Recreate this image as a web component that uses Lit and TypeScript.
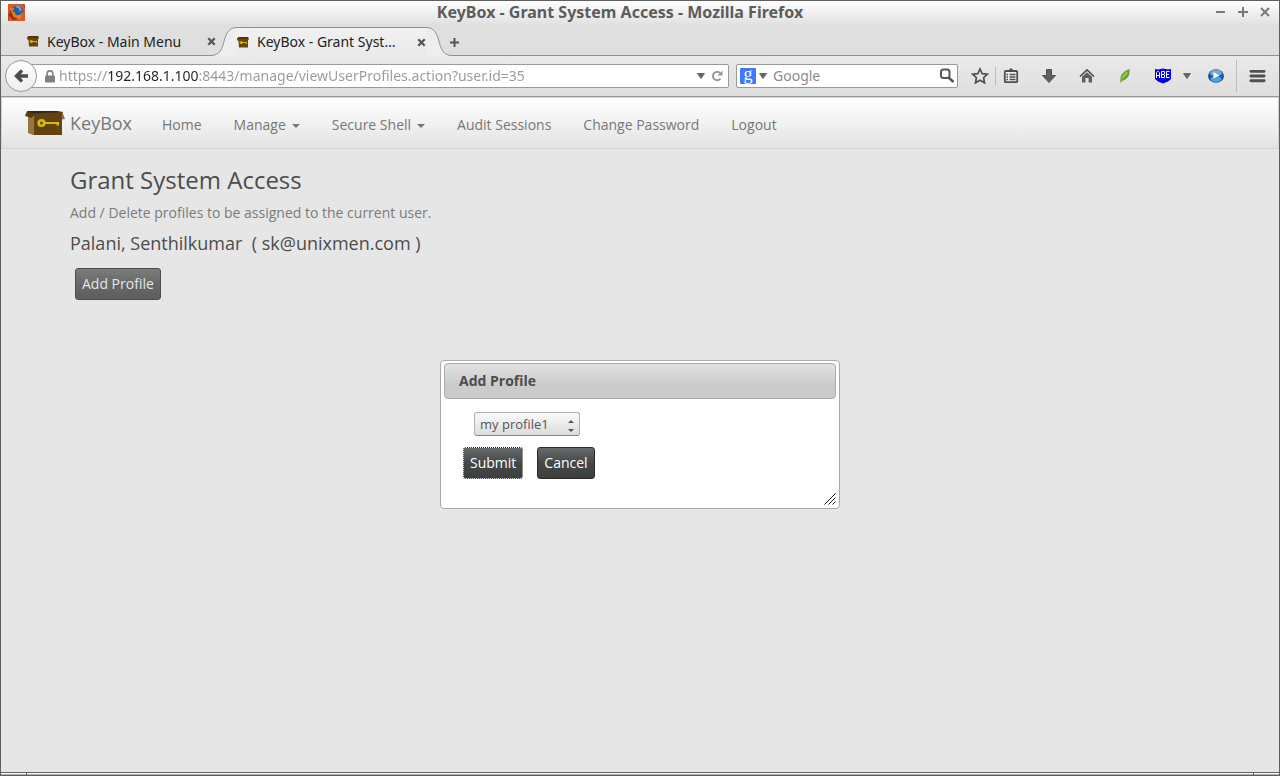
import { LitElement, html, css, svg } from "lit";
import { customElement } from "lit/decorators.js";

const favicon = html`<svg class="favicon" viewBox="0 0 12 11" width="12" height="11" aria-hidden="true">
  <path d="M0 1.5L1.5 0H11L12 2.500L11 3V10.500H2L1.500 4L0 3Z" fill="#6a4510"/>
  <path d="M1 1.500L2 0H11L11.500 1.500Z" fill="#4a2f08"/>
  <circle cx="4.300" cy="5.500" r="1.600" fill="#d8b400"/>
  <path d="M5 5h5v2h-1v-1h-4z" fill="#d8b400"/>
</svg>`;

const closeIcon = html`<svg viewBox="0 0 9 9" width="9" height="9" aria-hidden="true">
  <path d="M1.300 1.300L7.700 7.700M7.700 1.300L1.300 7.700" stroke="#555" stroke-width="2.300"/>
</svg>`;

const triangle = html`<svg viewBox="0 0 8 6" width="8" height="6" aria-hidden="true">
  <path d="M.5 .5H7.500L4 5.500Z" fill="#666" stroke="#555" stroke-width=".8"/>
</svg>`;

const icon = (content: unknown, size = 18) =>
  html`<svg viewBox="0 0 18 18" width=${size} height=${size} aria-hidden="true">${content}</svg>`;

@customElement("browser-chrome")
class BrowserChrome extends LitElement {
  static styles = css`
    :host { display: block; font-family: "Noto Sans", "Open Sans", sans-serif; color: #333; }
    svg { display: block; flex: none; }
    button { border: 0; padding: 0; margin: 0; background: none; display: flex; align-items: center; justify-content: center; flex: none; font: inherit; }
    .titlebar { display: flex; align-items: center; box-sizing: border-box; height: 24px; padding: 0 8px 2px 7px; background: linear-gradient(#fff, #e0e0e0); }
    .title { flex: 1; margin: 0; text-align: center; font: bold 16px/22px "Noto Sans", "Open Sans", sans-serif; color: #5c5c5c; white-space: nowrap; }
    .controls { display: flex; gap: 10px; }
    .tabs { display: flex; height: 31px; background: #dfdfdf; box-shadow: inset 0 -1px #919191; align-items: flex-end; }
    .tab { display: flex; align-items: center; height: 29px; font-size: 14px; line-height: 28px; white-space: nowrap; color: #222; }
    .label { flex: 1; margin: 0 0 0 8px; }
    .first { width: 189px; padding: 0 0 0 26px; }
    .edge { width: 26px; height: 29px; }
    .active .inner { display: flex; align-items: center; box-sizing: border-box; height: 29px; width: 189px; border-top: 1px solid #919191; background: linear-gradient(#f1f1f1, #eaeaea); }
    .active { margin-left: -5px; }
    .plus { height: 28px; width: 14px; margin-left: -5px; }
    .toolbar { display: flex; align-items: center; height: 40px; background: linear-gradient(#eaeaea, #dedede); border-bottom: 1px solid #999; padding: 0 8px 0 4px; }
    .back { width: 32px; height: 32px; box-sizing: border-box; border: 1px solid #919ba3; border-radius: 50%; background: linear-gradient(#fff, #eee); z-index: 1; }
    .field { display: flex; align-items: center; box-sizing: border-box; height: 24px; border: 1px solid #999; border-radius: 2px; background: #fff; }
    .address { flex: 1; margin-left: -8px; padding: 0 5px 0 15px; }
    .field input { min-width: 0; flex: 1; height: 22px; border: 0; padding: 0; margin: 0; outline: 0; background: transparent; font: 14px/22px "Noto Sans", "Open Sans", sans-serif; color: #999; }
    .address input { margin-left: 4px; background: linear-gradient(90deg, #999 49px, #222 49px, #222 139px, #999 139px); -webkit-background-clip: text; background-clip: text; -webkit-text-fill-color: transparent; }
    .reload { margin-left: 6px; }
    .search { width: 222px; margin-left: 7px; padding: 0 2px 0 3px; }
    .engine { gap: 3px; }
    .google { width: 16px; height: 16px; border-radius: 1px; background: #4079ff; color: #fff; font: 18px/12px "Liberation Serif", serif; text-align: center; }
    .search input { margin-left: 6px; }
    .search input::placeholder { color: #8c8c8c; opacity: 1; }
    .tools { display: flex; align-items: center; }
    .tool { width: 38px; height: 32px; }
    .star { width: 30px; margin-left: 7px; }
    .divider { width: 1px; height: 18px; margin-right: -4px; background: #bbb; }
    .drop { width: 10px; }
    .play { margin-left: 5px; }
    .menu { box-sizing: border-box; border-left: 1px solid #b5bfca; margin-left: 1px; width: 35px; justify-content: flex-end; padding-right: 5px; }
  `;

  render() {
    return html`
      <header class="titlebar">
        <svg viewBox="0 0 16 16" width="17" height="17" aria-hidden="true">
          <rect width="16" height="16" rx="1" fill="#b9431f"/>
          <path d="M0 1L5 0H14L16 5V16H1Z" fill="#d95a22"/>
          <circle cx="9" cy="7" r="5.500" fill="#285d9b"/>
          <path d="M7 3l3 1 1 3 2-1-1-3-3-2z" fill="#6fa6cf"/>
          <path d="M2 3c1 1 2 1 4 1L4 7c2 0 3 1 3 3 2 1 5 1 7-3 0 5-3 8-6 8-5 0-8-6-6-12z" fill="#e67b2a"/>
          <path d="M2 5l3 7 5 2-5 1-4-4z" fill="#8f2f1d"/>
        </svg>
        <h1 class="title">KeyBox - Grant System Access - Mozilla Firefox</h1>
        <div class="controls">
          ${["M1 6H10", "M6 1V11M1 6H11", "M2 2L10 10M10 2L2 10"].map(
            (d, i) => html`<button aria-label=${["Minimize", "Maximize", "Close"][i]}>
              <svg viewBox="0 0 12 12" width="12" height="12"><path d=${d} stroke="#7a7a7a" stroke-width="2" fill="none"/></svg>
            </button>`
          )}
        </div>
      </header>
      <nav class="tabs" aria-label="Tabs">
        <div class="tab first">${favicon}<span class="label">KeyBox - Main Menu</span><button aria-label="Close tab">${closeIcon}</button></div>
        <div class="tab active">
          <svg class="edge" viewBox="0 0 26 29"><path d="M0 29V28.500C18 28.500 8 .5 26 .5V29Z" fill="#eeeeee"/><path d="M0 28.500C18 28.500 8 .5 26 .5" fill="none" stroke="#919191"/></svg>
          <div class="inner">${favicon}<span class="label">KeyBox - Grant Syst…</span><button aria-label="Close tab">${closeIcon}</button></div>
          <svg class="edge" viewBox="0 0 26 29"><path d="M26 29V28.500C8 28.500 18 .5 0 .5V29Z" fill="#eeeeee"/><path d="M26 28.500C8 28.500 18 .5 0 .5" fill="none" stroke="#919191"/></svg>
        </div>
        <button class="plus" aria-label="New tab"><svg viewBox="0 0 9 9" width="9" height="9"><path d="M4.500 0V9M0 4.500H9" stroke="#555" stroke-width="2"/></svg></button>
      </nav>
      <div class="toolbar">
        <button class="back" aria-label="Back"><svg viewBox="0 0 16 16" width="16" height="16"><path d="M9 2.500L3.500 8L9 13.500M4 8H15" fill="none" stroke="#4d4d4d" stroke-width="3.400"/></svg></button>
        <div class="field address">
          <svg viewBox="0 0 10 13" width="10" height="13" aria-hidden="true"><path d="M2.200 6V3.500a2.800 2.600 0 0 1 5.600 0V6" fill="none" stroke="#808080" stroke-width="1.600"/><rect y="5.500" width="10" height="7" rx="1" fill="#808080"/></svg>
          <input aria-label="Address" value="https://192.168.1.100:8443/manage/viewUserProfiles.action?user.id=35">
          <button aria-label="History">${triangle}</button>
          <button class="reload" aria-label="Reload"><svg viewBox="0 0 12 12" width="12" height="12"><path d="M9.500 8.500A4.200 4.200 0 1 1 9 3" fill="none" stroke="#8d99a3" stroke-width="1.900"/><path d="M11.500 .5V5.500H6.500Z" fill="#8d99a3"/></svg></button>
        </div>
        <div class="field search">
          <button class="engine" aria-label="Search engine"><span class="google">g</span>${triangle}</button>
          <input aria-label="Search" placeholder="Google">
          <button aria-label="Go"><svg viewBox="0 0 16 16" width="16" height="16"><rect x="2" y="1.500" width="8.500" height="8.500" rx="2.500" fill="none" stroke="#555" stroke-width="2"/><path d="M9.500 9.500L14.500 14" stroke="#555" stroke-width="2.600"/></svg></button>
        </div>
        <div class="tools">
          <button class="tool star" aria-label="Bookmark">${icon(svg`<path d="M9 2L11.200 6.600L16.300 7.200L12.600 10.700L13.500 15.800L9 13.300L4.500 15.800L5.400 10.700L1.700 7.200L6.800 6.600Z" fill="none" stroke="#4f4f4f" stroke-width="1.700"/>`)}</button>
          <span class="divider"></span>
          <button class="tool" aria-label="Bookmarks">${icon(svg`<rect x="2.800" y="4" width="12.400" height="11.200" rx="1" fill="#eee" stroke="#4f4f4f" stroke-width="1.800"/><path d="M5 4.500V3H7L8 1.500H10L11 3H13V4.500Z" fill="#4f4f4f"/><path d="M4.500 7.500H6M7.500 7.500H13.500M4.500 10H6M7.500 10H13.500M4.500 12.500H6M7.500 12.500H13.500" stroke="#4f4f4f" stroke-width="1.400"/>`)}</button>
          <button class="tool" aria-label="Downloads">${icon(svg`<path d="M6.500 2.500H11.500V8.500H15.500L9 15.500L2.500 8.500H6.500Z" fill="#5f5f5f" stroke="#4f4f4f"/>`)}</button>
          <button class="tool" aria-label="Home">${icon(svg`<path d="M2 9.500L9 3L16 9.500" fill="none" stroke="#4f4f4f" stroke-width="1.700"/><path d="M4 9.800L9 5.300L14 9.800V15.500H10.600V11H7.400V15.500H4Z" fill="#5f5f5f"/>`)}</button>
          <button class="tool" aria-label="Leaf">${icon(svg`<path d="M13.500 2C8 4 4 7.500 4.500 12.500L4 16L6 14C11 12.500 14.500 8.500 13.500 2Z" fill="#65a532"/><path d="M12.500 4C8.500 6 6 9 5.500 12.500C8 10 10 8 12.500 4Z" fill="#a4cf72"/>`)}</button>
          <button class="tool" aria-label="ABE">${icon(svg`<path d="M1 2L4 2.500L9 1.500L14 2.500L17 2V12L14 14.500L9 16.500L4 14.500L1 12Z" fill="#0000e8"/><path d="M2.500 11V5.500L3.500 4.500H4.500L5.500 5.500V11M2.500 8.500H5.500M7.500 4.500V10.500H10.500V8L9.500 7.500L10.500 7V4.500H7.500M7.500 7.500H10M15.500 4.500H12.500V10.500H15.500M12.500 7.500H15" fill="none" stroke="#fff"/>`)}</button>
          <button class="drop" aria-label="ABE options">${triangle}</button>
          <button class="tool play" aria-label="Play">${icon(svg`<ellipse cx="9" cy="9" rx="8" ry="6.800" fill="#1a5699"/><ellipse cx="9" cy="12" rx="5.500" ry="3" fill="#47a7df"/><ellipse cx="9" cy="6" rx="6" ry="3.300" fill="#7ba4cf"/><path d="M6.500 5L12.500 8.500L6.500 11.500Z" fill="#fff"/>`)}</button>
          <button class="tool menu" aria-label="Menu">${icon(svg`<path d="M2 3.500H16M2 8.500H16M2 13.500H16" stroke="#4f4f4f" stroke-width="3" stroke-linecap="round"/>`, 17)}</button>
        </div>
      </div>
    `;
  }
}

@customElement("keybox-page")
class KeyboxPage extends LitElement {
  static styles = css`
    :host { display: block; position: relative; background: #e6e6e6; font: 14px/20px "Open Sans", sans-serif; color: #7b7b7b; }
    .navbar { display: flex; align-items: center; box-sizing: border-box; height: 52px; padding: 0 23px; border: 1px solid #d4d4d4; background: linear-gradient(#fff, #e3e3e3); }
    .navbar a { color: #777; text-decoration: none; display: flex; align-items: center; white-space: nowrap; }
    .brand { gap: 5px; font-size: 18px; margin-right: 30px; }
    .links { display: flex; gap: 32px; margin: 0; padding: 3px 0 0; list-style: none; }
    .caret { margin-left: 6px; margin-top: 2px; border: 4px solid transparent; border-top-color: #777; border-bottom: 0; }
    .container { box-sizing: border-box; max-width: 1170px; margin: 0 auto; padding: 17px 15px; }
    h2, h3, p { margin: 0; font-weight: normal; }
    h2 { font-size: 24px; line-height: 28px; color: #4c4c4c; }
    p { margin-top: 9px; }
    h3 { margin-top: 9px; font-size: 18px; line-height: 22px; color: #4c4c4c; white-space: pre-wrap; }
    .btn { box-sizing: border-box; height: 32px; padding: 0 6px; border: 1px solid #2b2b2b; border-radius: 3px; background: linear-gradient(#666a6a, #454848 50%, #3c3f3d); color: #fff; font: 14px/20px "Open Sans", sans-serif; }
    .add { margin: 14px 5px 0; border-color: #4c4e4e; background: linear-gradient(#7c7e7e, #666868 50%, #5c5f5d); color: #e6e6e6; }
    .overlay { position: absolute; inset: 0; display: grid; place-items: center; }
    .dialog { position: relative; box-sizing: border-box; width: 400px; padding: 2px 3px 29px; border: 1px solid #aaa; border-radius: 4px; background: #fff; }
    .heading { margin: 0; padding: 7px 14px; border: 1px solid #aaa; border-radius: 4px; background: linear-gradient(#e2e2e2, #cbcbcb 60%, #cbcbcb); color: #4c4c4c; font-size: 14px; font-weight: bold; line-height: 20px; }
    .form { display: flex; flex-direction: column; align-items: flex-start; gap: 11px; padding: 13px 19px 0; }
    .picker { position: relative; display: flex; margin-left: 11px; }
    select { appearance: none; box-sizing: border-box; width: 106px; height: 24px; padding: 0 5px; border: 1px solid #b0b0b0; border-bottom-color: #888; border-radius: 3px; background: linear-gradient(#fafafa, #dcdcdc); color: #555; font: 13px/20px "Open Sans", sans-serif; }
    .arrows { position: absolute; right: 6px; top: 8px; pointer-events: none; }
    .actions { display: flex; gap: 14px; }
    .submit { border: 1px dotted #fff; outline: 0; background: linear-gradient(#666a6a, #454848 50%, #3c3f3d) padding-box, linear-gradient(#222, #222) border-box; }
    .grip { position: absolute; right: 3px; bottom: 3px; }
  `;

  private links = [
    { label: "Home" },
    { label: "Manage", menu: true },
    { label: "Secure Shell", menu: true },
    { label: "Audit Sessions" },
    { label: "Change Password" },
    { label: "Logout" },
  ];

  render() {
    return html`
      <nav class="navbar">
        <a class="brand" href="#">
          <svg viewBox="0 0 40 26" width="40" height="26" aria-hidden="true">
            <path d="M3 3L10 6V25H8L3 23Z" fill="#9a7440"/>
            <path d="M2 1H32L38 2L37 6H9Z" fill="#33271c"/>
            <path d="M9 3.500L37 2V25H9Z" fill="#644313"/>
            <path d="M2 1L9 3.500L7 8L0 6Z" fill="#5b3b10"/>
            <path d="M37 1L40 9L37 9.500Z" fill="#9a7440"/>
            <circle cx="16.500" cy="13" r="2.800" fill="none" stroke="#d8b90c" stroke-width="2.600"/>
            <path d="M20 12H34V15.500H31.500V14H20Z" fill="#d8b90c"/>
          </svg>
          KeyBox
        </a>
        <ul class="links">
          ${this.links.map((l) => html`<li><a href="#">${l.label}${l.menu ? html`<span class="caret"></span>` : ""}</a></li>`)}
        </ul>
      </nav>
      <main class="container">
        <h2>Grant System Access</h2>
        <p>Add / Delete profiles to be assigned to the current user.</p>
        <h3>Palani, Senthilkumar  ( sk@unixmen.com )</h3>
        <button class="btn add">Add Profile</button>
      </main>
      <div class="overlay">
        <section class="dialog" role="dialog" aria-labelledby="dialog-title">
          <h4 class="heading" id="dialog-title">Add Profile</h4>
          <form class="form">
            <div class="picker">
              <select aria-label="Profile"><option>my profile1</option></select>
              <svg class="arrows" viewBox="0 0 6 12" width="6" height="12" aria-hidden="true"><path d="M0 3L3 0L6 3ZM0 9L3 12L6 9Z" fill="#555"/></svg>
            </div>
            <div class="actions">
              <button class="btn submit" type="button">Submit</button>
              <button class="btn" type="button">Cancel</button>
            </div>
          </form>
          <svg class="grip" viewBox="0 0 12 12" width="12" height="12" aria-hidden="true"><path d="M.5 11.500L11.500 .5M4.500 11.500L11.500 4.500M8.500 11.500L11.500 8.500" stroke="#222"/></svg>
        </section>
      </div>
    `;
  }
}

@customElement("app-root")
class AppRoot extends LitElement {
  static styles = css`
    :host { display: flex; flex-direction: column; box-sizing: border-box; min-height: 100vh; border: 1px solid #5f5f5f; }
    .page { flex: 1; }
    .frame { display: flex; justify-content: space-between; height: 2px; padding: 0 25px; border-top: 1px solid #5f5f5f; background: linear-gradient(#fff 50%, #aaa 50%); }
    .notch { width: 1px; background: #5f5f5f; }
  `;

  render() {
    return html`
      <browser-chrome></browser-chrome>
      <keybox-page class="page"></keybox-page>
      <div class="frame"><span class="notch"></span><span class="notch"></span></div>
    `;
  }
}
